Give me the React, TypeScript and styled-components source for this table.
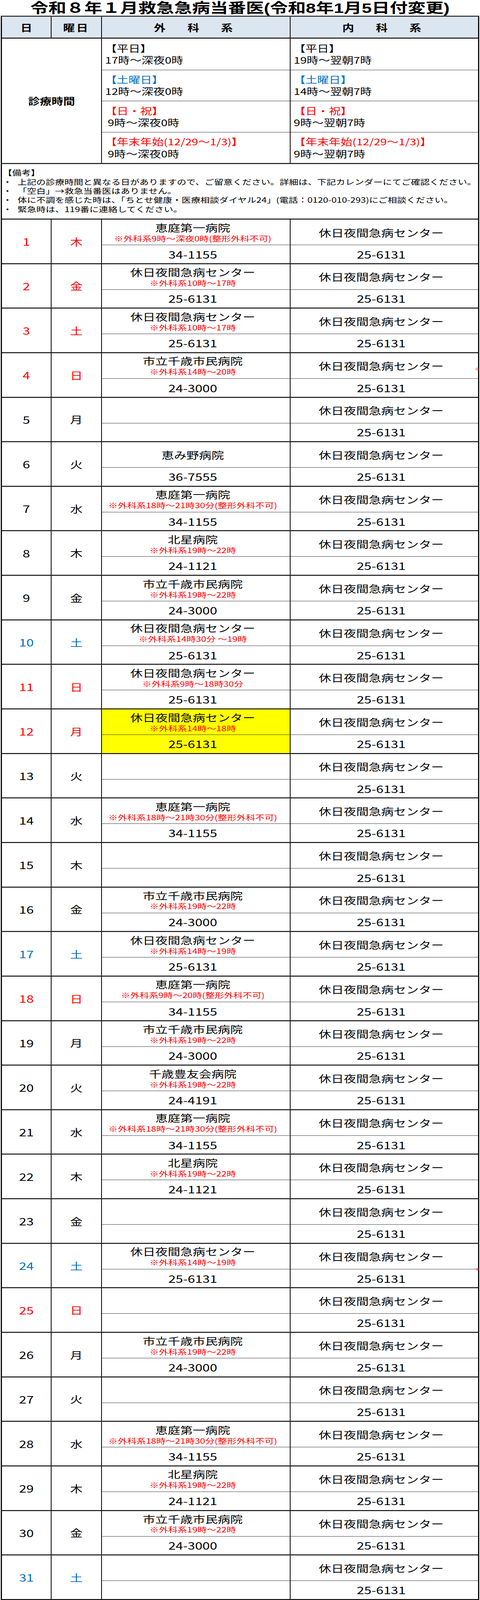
import { useState } from 'react';
import styled, { createGlobalStyle } from 'styled-components';

const GlobalStyle = createGlobalStyle`
  html, body {
    margin: 0;
    padding: 0;
    background: #fff;
  }
  body {
    font-family: "Noto Sans CJK JP", "Noto Sans", sans-serif;
    color: #000;
  }
`;

// the sheet is laid out for a 5269px tall display and squeezed to fit shorter screens
const DESIGN_HEIGHT = 5269;

const COLS = '125px 129px 483px 1fr';

const tones = {
  red: '#ff0000',
  blue: '#0070c0',
  black: '#000',
};

type Tone = keyof typeof tones;

const Frame = styled.div`
  width: 1229px;
  overflow: hidden;
`;

const Page = styled.div`
  position: relative;
  width: 1229px;
  transform-origin: top left;
`;

const Title = styled.h1`
  margin: 0;
  height: 52px;
  line-height: 52px;
  font-family: "Liberation Sans", "Noto Sans CJK JP", sans-serif;
  font-size: 46px;
  font-weight: 700;
  text-align: center;
  white-space: nowrap;
`;

const Table = styled.div`
  margin-left: 2px;
  width: 1225px;
  box-sizing: border-box;
  border: 3px solid #000;
`;

const HeaderRow = styled.div`
  display: grid;
  grid-template-columns: ${COLS};
  height: 72px;
  box-sizing: border-box;
  border-bottom: 3px solid #000;
  background: #dce6f1;
`;

const HeadCell = styled.div<{ $spacing?: number }>`
  display: flex;
  align-items: center;
  justify-content: center;
  font-size: 30px;
  font-weight: 700;
  letter-spacing: ${(p) => p.$spacing ?? 0}px;
  white-space: pre;

  & + & {
    border-left: 2px solid #000;
  }
`;

const HoursGrid = styled.div`
  display: grid;
  grid-template-columns: ${COLS};
  grid-template-rows: repeat(4, 1fr);
  height: 413px;
  box-sizing: border-box;
  border-bottom: 3px solid #000;
`;

const HoursLabel = styled.div`
  grid-column: 1 / span 2;
  grid-row: 1 / span 4;
  display: flex;
  align-items: center;
  justify-content: center;
  font-size: 30px;
  font-weight: 700;
`;

const HoursCell = styled.div<{ $first: boolean }>`
  display: flex;
  flex-direction: column;
  justify-content: center;
  padding-left: 8px;
  border-left: 2px solid #000;
  border-top: ${(p) => (p.$first ? 'none' : '1.5px solid #000')};
  font-size: 30px;
  line-height: 39px;
  white-space: pre;
`;

const ToneText = styled.span<{ $tone: Tone }>`
  color: ${(p) => tones[p.$tone]};
`;

const Notes = styled.div`
  height: 180px;
  box-sizing: border-box;
  padding: 13px 0 0 2px;
  font-size: 24px;
  line-height: 30px;
  white-space: nowrap;
`;

const NoteLine = styled.div`
  display: flex;
`;

const Bullet = styled.span`
  width: 38px;
  flex: none;
`;

const DayRow = styled.div`
  display: grid;
  grid-template-columns: ${COLS};
  grid-template-rows: 83px 1fr;
  height: 146.65px;
  box-sizing: border-box;
  border-top: 3px solid #000;
`;

const DayCell = styled.div<{ $tone: Tone; $week?: boolean }>`
  grid-row: 1 / span 2;
  display: flex;
  align-items: center;
  justify-content: center;
  color: ${(p) => tones[p.$tone]};
  font-size: ${(p) => (p.$week ? 32 : 34)}px;
  border-left: ${(p) => (p.$week ? '2px solid #000' : 'none')};
`;

const Slot = styled.div<{ $lower?: boolean; $mark?: boolean }>`
  display: flex;
  flex-direction: column;
  align-items: center;
  justify-content: center;
  padding-right: 16px;
  border-left: 2px solid #000;
  border-top: ${(p) => (p.$lower ? '1px solid #000' : 'none')};
  background: ${(p) => (p.$mark ? '#ffff00' : 'transparent')};
  white-space: pre;
`;

const Name = styled.div`
  font-size: 32px;
  line-height: 40px;
`;

const Remark = styled.div`
  font-size: 24px;
  line-height: 32px;
  color: #ff0000;
`;

const Phone = styled.div`
  font-size: 34px;
  line-height: 48px;
`;

const EdgeMark = styled.span<{ $top: number }>`
  position: absolute;
  top: ${(p) => p.$top}px;
  left: 1216px;
  font-size: 12px;
  line-height: 12px;
  color: #ff0000;
`;

const hours: { label: string; tone: Tone; surg: string; med: string }[] = [
  { label: '【平日】', tone: 'black', surg: '17時～深夜0時', med: '19時～翌朝7時' },
  { label: '【土曜日】', tone: 'blue', surg: '12時～深夜0時', med: '14時～翌朝7時' },
  { label: '【日・祝】', tone: 'red', surg: ' 9時～深夜0時', med: '9時～翌朝7時' },
  { label: '【年末年始(12/29～1/3)】', tone: 'red', surg: ' 9時～深夜0時', med: '9時～翌朝7時' },
];

const notes = [
  '上記の診療時間と異なる日がありますので、ご留意ください。詳細は、下記カレンダーにてご確認ください。',
  '「空白」→救急当番医はありません。',
  '体に不調を感じた時は、「ちとせ健康・医療相談ダイヤル24」(電話：0120-010-293)にご相談ください。',
  '緊急時は、119番に連絡してください。',
];

type Duty = { name: string; note?: string; tel: string };

const KYUJITSU = '休日夜間急病センター';
const EBETSU = { name: '恵庭第一病院', note: '※外科系18時～21時30分(整形外科不可)', tel: '34-1155' };
const CITY = { name: '市立千歳市民病院', note: '※外科系19時～22時', tel: '24-3000' };
const HOKUSEI = { name: '北星病院', note: '※外科系19時～22時', tel: '24-1121' };

type Day = { d: number; w: string; tone: Tone; duty?: Duty; mark?: boolean };

const days: Day[] = [
  { d: 1, w: '木', tone: 'red', duty: { name: '恵庭第一病院', note: '※外科系9時～深夜0時(整形外科不可)', tel: '34-1155' } },
  { d: 2, w: '金', tone: 'red', duty: { name: KYUJITSU, note: '※外科系10時～17時', tel: '25-6131' } },
  { d: 3, w: '土', tone: 'red', duty: { name: KYUJITSU, note: '※外科系10時～17時', tel: '25-6131' } },
  { d: 4, w: '日', tone: 'red', duty: { name: '市立千歳市民病院', note: '※外科系14時～20時', tel: '24-3000' } },
  { d: 5, w: '月', tone: 'black' },
  { d: 6, w: '火', tone: 'black', duty: { name: '恵み野病院', tel: '36-7555' } },
  { d: 7, w: '水', tone: 'black', duty: EBETSU },
  { d: 8, w: '木', tone: 'black', duty: HOKUSEI },
  { d: 9, w: '金', tone: 'black', duty: CITY },
  { d: 10, w: '土', tone: 'blue', duty: { name: KYUJITSU, note: '※外科系14時30分 ～19時', tel: '25-6131' } },
  { d: 11, w: '日', tone: 'red', duty: { name: KYUJITSU, note: '※外科系9時～18時30分', tel: '25-6131' } },
  { d: 12, w: '月', tone: 'red', mark: true, duty: { name: KYUJITSU, note: '※外科系14時～18時', tel: '25-6131' } },
  { d: 13, w: '火', tone: 'black' },
  { d: 14, w: '水', tone: 'black', duty: EBETSU },
  { d: 15, w: '木', tone: 'black' },
  { d: 16, w: '金', tone: 'black', duty: CITY },
  { d: 17, w: '土', tone: 'blue', duty: { name: KYUJITSU, note: '※外科系14時～19時', tel: '25-6131' } },
  { d: 18, w: '日', tone: 'red', duty: { name: '恵庭第一病院', note: '※外科系9時～20時(整形外科不可)', tel: '34-1155' } },
  { d: 19, w: '月', tone: 'black', duty: CITY },
  { d: 20, w: '火', tone: 'black', duty: { name: '千歳豊友会病院', note: '※外科系19時～22時', tel: '24-4191' } },
  { d: 21, w: '水', tone: 'black', duty: EBETSU },
  { d: 22, w: '木', tone: 'black', duty: HOKUSEI },
  { d: 23, w: '金', tone: 'black' },
  { d: 24, w: '土', tone: 'blue', duty: { name: KYUJITSU, note: '※外科系14時～19時', tel: '25-6131' } },
  { d: 25, w: '日', tone: 'red' },
  { d: 26, w: '月', tone: 'black', duty: CITY },
  { d: 27, w: '火', tone: 'black' },
  { d: 28, w: '水', tone: 'black', duty: EBETSU },
  { d: 29, w: '木', tone: 'black', duty: HOKUSEI },
  { d: 30, w: '金', tone: 'black', duty: CITY },
  { d: 31, w: '土', tone: 'blue' },
];

export default function App() {
  const [fit] = useState(() => Math.min(1, window.innerHeight / DESIGN_HEIGHT));

  return (
    <Frame style={{ height: DESIGN_HEIGHT * fit }}>
      <GlobalStyle />
      <Page style={{ transform: `scaleY(${fit})` }}>
        <Title>令和８年１月救急急病当番医(令和8年1月5日付変更)</Title>
        <Table>
          <HeaderRow>
            <HeadCell>日</HeadCell>
            <HeadCell $spacing={4}>曜日</HeadCell>
            <HeadCell $spacing={13}>外　科　系</HeadCell>
            <HeadCell $spacing={13}>内　科　系</HeadCell>
          </HeaderRow>

          <HoursGrid>
            <HoursLabel>診療時間</HoursLabel>
            {hours.map((h, i) => [
              <HoursCell key={`s${i}`} $first={i === 0} style={{ gridColumn: 3, gridRow: i + 1 }}>
                <ToneText $tone={h.tone}>{h.label}</ToneText>
                <span>{h.surg}</span>
              </HoursCell>,
              <HoursCell key={`m${i}`} $first={i === 0} style={{ gridColumn: 4, gridRow: i + 1 }}>
                <ToneText $tone={h.tone}>{h.label}</ToneText>
                <span>{h.med}</span>
              </HoursCell>,
            ])}
          </HoursGrid>

          <Notes>
            <div>【備考】</div>
            {notes.map((n) => (
              <NoteLine key={n}>
                <Bullet>・</Bullet>
                <span>{n}</span>
              </NoteLine>
            ))}
          </Notes>

          {days.map((day) => (
            <DayRow key={day.d}>
              <DayCell $tone={day.tone}>{day.d}</DayCell>
              <DayCell $tone={day.tone} $week>
                {day.w}
              </DayCell>
              <Slot $mark={day.mark}>
                {day.duty && <Name>{day.duty.name}</Name>}
                {day.duty?.note && <Remark>{day.duty.note}</Remark>}
              </Slot>
              <Slot>
                <Name>{KYUJITSU}</Name>
              </Slot>
              <Slot $lower $mark={day.mark}>
                {day.duty && <Phone>{day.duty.tel}</Phone>}
              </Slot>
              <Slot $lower>
                <Phone>25-6131</Phone>
              </Slot>
            </DayRow>
          ))}
        </Table>
        <EdgeMark $top={1209}>※</EdgeMark>
        <EdgeMark $top={4174}>※</EdgeMark>
      </Page>
    </Frame>
  );
}
